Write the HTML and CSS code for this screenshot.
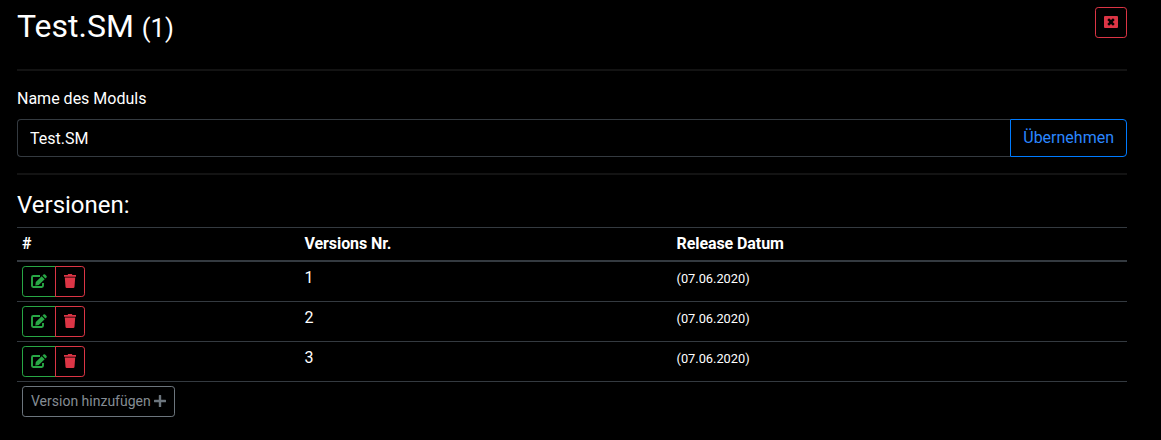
FILE: index.html
```html
<!DOCTYPE html>
<html lang="de">
<head>
<meta charset="utf-8">
<title>Test.SM</title>
<link rel="stylesheet" href="styles.css">
</head>
<body>
<svg class="sprite" aria-hidden="true">
<symbol id="edit" viewBox="0 0 16 14"><path d="M9 2H2.200A1.200 1.200 0 0 0 1 3.200v8.600A1.200 1.200 0 0 0 2.200 13h8.600A1.200 1.200 0 0 0 12 11.800V9" fill="none" stroke="currentColor" stroke-width="1.900"/><path d="M10.700 2.200l3 3-6 5.900-3.400.5.500-3.500zM11.500 1.500l1-1q.8-.7 1.600 0l1.400 1.400q.7.800 0 1.500l-1.100 1.100z"/></symbol>
<symbol id="trash" viewBox="0 0 12 14"><path d="M0 1h3.600l.5-1h3.800l.5 1H12v1.700H0zM.8 3.500h10.400l-.7 9.300q-.1 1.200-1.200 1.200H2.700q-1.100 0-1.200-1.200z"/></symbol>
<symbol id="plus" viewBox="0 0 12 12"><path d="M5.300 0h1.400q.5 0 .5.500v4.300h4.300q.5 0 .5.500v1.400q0 .5-.5.500H7.200v4.300q0 .5-.5.500H5.300q-.5 0-.5-.5V7.200H.5Q0 7.200 0 6.700V5.300q0-.5.500-.5h4.300V.5q0-.5.500-.5z"/></symbol>
<symbol id="close" viewBox="0 0 14 12"><path fill-rule="evenodd" d="M1 0h12q1 0 1 1v10q0 1-1 1H1q-1 0-1-1V1q0-1 1-1zM5 2.200L3.300 3.900 5.300 6l-2 2.100L5 9.800l2-1.900 2 1.900 1.700-1.700-2-2.100 2-2.100L9 2.200 7 4.100z"/></symbol>
</svg>
<main class="page">
<header class="header">
<h1 class="title">Test.SM <small>(1)</small></h1>
<button class="btn btn-sm danger"><svg class="icon close"><use href="#close"/></svg></button>
</header>
<hr class="rule">
<label class="label" for="name">Name des Moduls</label>
<div class="group"><input class="input" id="name" value="Test.SM"><button class="btn primary">Übernehmen</button></div>
<hr class="rule">
<h4 class="subtitle">Versionen:</h4>
<table class="table">
<thead><tr><th class="c1">#</th><th class="c2">Versions Nr.</th><th>Release Datum</th></tr></thead>
<tbody>
<tr><td><div class="actions"><button class="btn btn-sm success"><svg class="icon wide"><use href="#edit"/></svg></button><button class="btn btn-sm danger"><svg class="icon"><use href="#trash"/></svg></button></div></td><td>1</td><td><small>(07.06.2020)</small></td></tr>
<tr><td><div class="actions"><button class="btn btn-sm success"><svg class="icon wide"><use href="#edit"/></svg></button><button class="btn btn-sm danger"><svg class="icon"><use href="#trash"/></svg></button></div></td><td>2</td><td><small>(07.06.2020)</small></td></tr>
<tr><td><div class="actions"><button class="btn btn-sm success"><svg class="icon wide"><use href="#edit"/></svg></button><button class="btn btn-sm danger"><svg class="icon"><use href="#trash"/></svg></button></div></td><td>3</td><td><small>(07.06.2020)</small></td></tr>
<tr><td colspan="3"><button class="btn btn-sm secondary">Version hinzufügen <svg class="icon plus"><use href="#plus"/></svg></button></td></tr>
</tbody>
</table>
</main>
</body>
</html>
```
FILE: styles.css
```css
* { box-sizing: border-box; }
body { margin: 0; background: #000; color: #fff; font: 400 16px/1.5 Roboto, sans-serif; overflow: hidden; }
.sprite { display: none; }
.page { width: 1110px; margin-left: 17px; padding-top: 7px; }
.header { display: flex; justify-content: space-between; align-items: flex-start; height: 46px; }
.title { margin: 0; font-size: 32px; font-weight: 400; line-height: 38px; }
.title small { font-size: 80%; }
.rule { margin: 16px 0; border: 0; border-top: 2px solid #131313; }
.label { display: block; margin-bottom: 8px; }
.group { display: flex; height: 38px; }
.input { flex: 1; min-width: 0; padding: 7px 12px 5px; border: 1px solid #343a40; border-right: 0; border-radius: 4px 0 0 4px; background: #000; color: #fff; font: inherit; }
.btn { padding: 6px 12px; border: 1px solid; border-radius: 4px; background: transparent; font: inherit; }
.btn-sm { height: 31px; padding: 4px 8px; border-radius: 3.2px; font-size: 14px; line-height: 21px; }
.group .btn { border-radius: 0 4px 4px 0; }
.danger { color: #dc3545; }
.success { color: #28a745; }
.primary { color: #2b87ff; border-color: #007bff; }
.secondary { color: #858d94; border-color: #6c757d; }
.icon { width: 12px; height: 14px; fill: currentColor; vertical-align: -2px; }
.icon.close { width: 14px; height: 12px; vertical-align: -1px; }
.icon.wide { width: 16px; }
.icon.plus { height: 12px; vertical-align: -1px; fill: #6c757d; }
.subtitle { margin: 0 0 7px; font-size: 24px; font-weight: 400; line-height: 29px; }
.table { width: 100%; border-collapse: collapse; }
.table th, .table td { padding: 4px 4px 4px 5px; border-top: 1px solid #343a40; text-align: left; vertical-align: top; }
.table th { border-bottom: 2px solid #343a40; font-weight: 700; letter-spacing: -.08px; }
.c1 { width: 282.5px; }
.c2 { width: 372px; }
.table small { font-size: 80%; }
.actions { display: flex; }
.actions .success { border-radius: 3.2px 0 0 3.2px; }
.actions .danger { margin-left: -1px; border-radius: 0 3.2px 3.2px 0; }
```
